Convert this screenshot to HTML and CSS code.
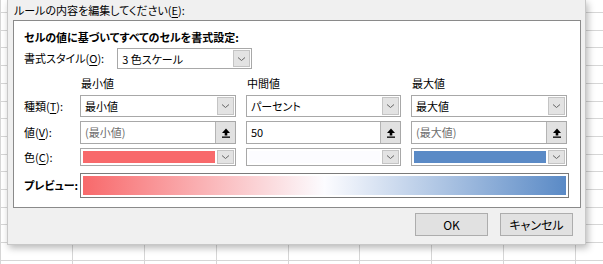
FILE: index.html
```html
<!DOCTYPE html>
<html lang="ja">

<head>
    <meta charset="UTF-8">
    <title>書式ルールの編集</title>
    <link rel="stylesheet" href="styles.css">
</head>

<body>
    <div class="dialog">
        <div class="prompt">ルールの内容を編集してください(<u>E</u>):</div>

        <div class="rule-box">
            <div class="heading">セルの値に基づいてすべてのセルを書式設定:</div>

            <div class="style-row">
                <span class="label">書式スタイル(<u>O</u>):</span>
                <div class="combo style-combo">
                    <span class="combo-text">3 色スケール</span>
                    <span class="drop"><svg width="9" height="6" viewBox="0 0 9 6"><path d="M1 1.5 L4.5 4.5 L8 1.5" fill="none" stroke="#666" stroke-width="1"/></svg></span>
                </div>
            </div>

            <div class="scale-grid">
                <span></span>
                <span class="col-head">最小値</span>
                <span class="col-head">中間値</span>
                <span class="col-head">最大値</span>

                <span class="label">種類(<u>T</u>):</span>
                <div class="combo">
                    <span class="combo-text">最小値</span>
                    <span class="drop"><svg width="9" height="6" viewBox="0 0 9 6"><path d="M1 1.5 L4.5 4.5 L8 1.5" fill="none" stroke="#666" stroke-width="1"/></svg></span>
                </div>
                <div class="combo">
                    <span class="combo-text">パーセント</span>
                    <span class="drop"><svg width="9" height="6" viewBox="0 0 9 6"><path d="M1 1.5 L4.5 4.5 L8 1.5" fill="none" stroke="#666" stroke-width="1"/></svg></span>
                </div>
                <div class="combo">
                    <span class="combo-text">最大値</span>
                    <span class="drop"><svg width="9" height="6" viewBox="0 0 9 6"><path d="M1 1.5 L4.5 4.5 L8 1.5" fill="none" stroke="#666" stroke-width="1"/></svg></span>
                </div>

                <span class="label">値(<u>V</u>):</span>
                <div class="field">
                    <span class="field-text muted">(最小値)</span>
                    <span class="pick"><svg width="10" height="10" viewBox="0 0 10 10"><path d="M5 0.5 L9 5 L6.3 5 L6.3 7.5 L3.7 7.5 L3.7 5 L1 5 Z" fill="#000"/><rect x="1" y="8.5" width="8" height="1.3" fill="#000"/></svg></span>
                </div>
                <div class="field">
                    <span class="field-text">50</span>
                    <span class="pick"><svg width="10" height="10" viewBox="0 0 10 10"><path d="M5 0.5 L9 5 L6.3 5 L6.3 7.5 L3.7 7.5 L3.7 5 L1 5 Z" fill="#000"/><rect x="1" y="8.5" width="8" height="1.3" fill="#000"/></svg></span>
                </div>
                <div class="field">
                    <span class="field-text muted">(最大値)</span>
                    <span class="pick"><svg width="10" height="10" viewBox="0 0 10 10"><path d="M5 0.5 L9 5 L6.3 5 L6.3 7.5 L3.7 7.5 L3.7 5 L1 5 Z" fill="#000"/><rect x="1" y="8.5" width="8" height="1.3" fill="#000"/></svg></span>
                </div>

                <span class="label">色(<u>C</u>):</span>
                <div class="combo color-combo">
                    <span class="swatch red"></span>
                    <span class="drop"><svg width="9" height="6" viewBox="0 0 9 6"><path d="M1 1.5 L4.5 4.5 L8 1.5" fill="none" stroke="#666" stroke-width="1"/></svg></span>
                </div>
                <div class="combo color-combo">
                    <span class="swatch white"></span>
                    <span class="drop"><svg width="9" height="6" viewBox="0 0 9 6"><path d="M1 1.5 L4.5 4.5 L8 1.5" fill="none" stroke="#666" stroke-width="1"/></svg></span>
                </div>
                <div class="combo color-combo">
                    <span class="swatch blue"></span>
                    <span class="drop"><svg width="9" height="6" viewBox="0 0 9 6"><path d="M1 1.5 L4.5 4.5 L8 1.5" fill="none" stroke="#666" stroke-width="1"/></svg></span>
                </div>
            </div>

            <div class="preview-row">
                <span class="label bold">プレビュー:</span>
                <div class="preview"><div class="preview-fill"></div></div>
            </div>
        </div>

        <div class="buttons">
            <button class="btn">OK</button>
            <button class="btn">キャンセル</button>
        </div>
    </div>
</body>

</html>
```

FILE: styles.css
```css
* {
    margin: 0;
    padding: 0;
    box-sizing: border-box;
}

body {
    width: 603px;
    height: 264px;
    overflow: hidden;
    font-family: 'Noto Sans CJK JP', 'Noto Sans', sans-serif;
    font-feature-settings: "palt";
    font-size: 11px;
    line-height: 15px;
    color: #000;
    background-color: #fff;
    background-image:
        repeating-linear-gradient(to right, #d6d6d6 0 1px, transparent 1px 71.9px),
        repeating-linear-gradient(to bottom, transparent 0 12px, #d6d6d6 12px 13px, transparent 13px 17.7px);
}

u {
    text-decoration-thickness: 1px;
    text-underline-offset: 2px;
}

.dialog {
    width: 579px;
    height: 245px;
    margin-left: 7px;
    padding: 3px 5px 0 5px;
    background-color: #f0f0f0;
    border: 1px solid #c8c8c8;
    border-top: none;
    box-shadow: 2px 3px 7px rgba(0, 0, 0, 0.28);
}

.prompt {
    padding-left: 1px;
}

.rule-box {
    width: 568px;
    height: 188px;
    margin-top: 2px;
    padding: 9px 10px 0 10px;
    background-color: #fff;
    border: 1px solid #8a8a8a;
}

.heading,
.bold {
    font-weight: bold;
}

.style-row {
    display: flex;
    align-items: center;
    gap: 13px;
    margin-top: 3px;
}

.combo {
    display: flex;
    align-items: stretch;
    height: 22px;
    border: 1px solid #a8a8a8;
    background-color: #fff;
    padding: 1px;
}

.style-combo {
    width: 135px;
    height: 21px;
}

.combo-text {
    flex: 1;
    padding-left: 3px;
    line-height: 18px;
}

.drop {
    width: 17px;
    display: flex;
    align-items: center;
    justify-content: center;
    background-color: #e3e3e3;
    border: 1px solid #c4c4c4;
}

.scale-grid {
    display: grid;
    grid-template-columns: 46px 156px 155px 156px;
    grid-template-rows: 16px 22px 23px 18px;
    column-gap: 10px;
    row-gap: 4px;
    margin-top: 6px;
    align-items: center;
}

.col-head {
    padding-left: 1px;
}

.field {
    display: flex;
    height: 23px;
    border: 1px solid #a8a8a8;
    background-color: #fff;
}

.field-text {
    flex: 1;
    padding-left: 4px;
    line-height: 21px;
}

.muted {
    color: #6d6d6d;
}

.pick {
    width: 20px;
    display: flex;
    align-items: center;
    justify-content: center;
    background-color: #e1e1e1;
    border-left: 1px solid #b4b4b4;
}

.color-combo {
    height: 18px;
}

.swatch {
    flex: 1;
    margin: 1px 2px 1px 1px;
}

.red {
    background-color: #f8696b;
}

.white {
    background-color: #fcfcff;
}

.blue {
    background-color: #5a8ac6;
}

.preview-row {
    display: grid;
    grid-template-columns: 56px 489px;
    align-items: center;
    margin-top: 7px;
}

.preview {
    height: 25px;
    border: 1px solid #7a7a7a;
    padding: 2px;
}

.preview-fill {
    height: 100%;
    background: linear-gradient(to right, #f8696b, #fcfcff 50%, #5a8ac6);
}

.buttons {
    display: flex;
    justify-content: flex-end;
    gap: 12px;
    margin-top: 5px;
    margin-right: 7px;
}

.btn {
    width: 73px;
    height: 23px;
    font-family: inherit;
    font-size: 12px;
    font-feature-settings: "palt";
    background-color: #e1e1e1;
    border: 1px solid #adadad;
    color: #000;
}
```
